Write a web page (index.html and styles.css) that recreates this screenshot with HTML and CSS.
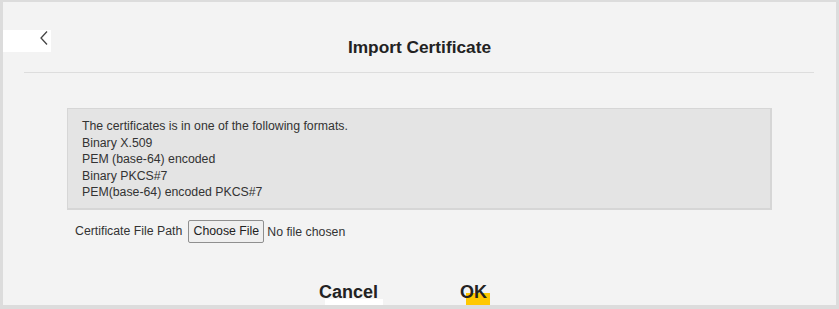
FILE: index.html
```html
<!DOCTYPE html>
<html lang="en">
<head>
    <meta charset="UTF-8">
    <title>Import Certificate</title>
    <link rel="stylesheet" href="styles.css">
</head>
<body>
    <div class="dialog">
        <!-- Заголовок -->
        <div class="header">
            <a class="back" href="#">
                <svg width="8" height="14" viewBox="0 0 8 14">
                    <polyline points="7,0.5 1,7 7,13.5" fill="none" stroke="#444" stroke-width="1.3"/>
                </svg>
            </a>
            <h1 class="title">Import Certificate</h1>
        </div>
        <div class="divider"></div>

        <!-- Форматы -->
        <div class="info">
            <p>The certificates is in one of the following formats.</p>
            <p>Binary X.509</p>
            <p>PEM (base-64) encoded</p>
            <p>Binary PKCS#7</p>
            <p>PEM(base-64) encoded PKCS#7</p>
        </div>

        <div class="file-row">
            <label for="cert-file">Certificate File Path</label>
            <input type="file" id="cert-file">
        </div>

        <!-- Кнопки -->
        <div class="footer">
            <button class="btn btn-cancel">Cancel</button>
            <button class="btn btn-ok">OK</button>
        </div>
    </div>
</body>
</html>
```

FILE: styles.css
```css
/* Общие стили */
body {
    margin: 0;
    padding: 0;
    font-family: "Liberation Sans", Arial, sans-serif;
    background-color: #dcdcdc;
}
.dialog {
    box-sizing: border-box;
    height: 309px;
    overflow: hidden;
    background-color: #f3f3f3;
    border-top: 2px solid #dcdcdc;
    border-left: 3px solid #dcdcdc;
    border-right: 3px solid #dcdcdc;
    border-bottom: 4px solid #dcdcdc;
}
.header {
    display: grid;
    grid-template-columns: 48px 1fr 48px;
    padding-top: 28px;
}
.back {
    display: flex;
    justify-content: flex-end;
    align-items: flex-start;
    height: 22px;
    padding: 1px 3px 0 0;
    box-sizing: border-box;
    background: #ffffff;
}
.title {
    margin: 7px 0 0;
    font-size: 17.3px;
    line-height: 20px;
    font-weight: bold;
    text-align: center;
    color: #222;
}
.divider {
    height: 1px;
    background: #dddddd;
    margin: 15px 22px 0 21px;
}
.info {
    width: 688px;
    margin: 35px 0 0 64px;
    padding: 9px 0 7px 14px;
    background: #e4e4e4;
    border: 1px solid #d6d6d6;
    border-right-width: 2px;
    border-bottom-width: 2px;
    font-size: 12.3px;
    color: #333;
}
.info p {
    margin: 0;
    line-height: 16.5px;
}
.file-row {
    display: flex;
    align-items: center;
    margin: 10px 0 0 72px;
    font-size: 12.3px;
    color: #333;
}
.file-row label {
    margin-right: 6px;
}
.file-row input {
    font-family: "Liberation Sans", Arial, sans-serif;
    font-size: 12.3px;
    color: #333;
}
.file-row input::file-selector-button {
    font-family: inherit;
    font-size: 12.3px;
    height: 23px;
    width: 76px;
    margin-right: 3px;
    padding: 0;
    background: #efefef;
    border: 1px solid #8f8f8f;
    border-radius: 2px;
    color: #222;
}
.footer {
    display: flex;
    gap: 82px;
    padding-left: 316px;
    margin-top: 39px;
}
.btn {
    position: relative;
    z-index: 0;
    padding: 0;
    border: none;
    background: none;
    font-family: "Liberation Sans", Arial, sans-serif;
    font-size: 18px;
    line-height: 20px;
    font-weight: bold;
    color: #222;
}
.btn::after {
    content: "";
    position: absolute;
    z-index: -1;
    left: 6px;
}
.btn-cancel::after {
    top: 17px;
    width: 58px;
    height: 10px;
    background: #ffffff;
}
.btn-ok::after {
    top: 11px;
    width: 24px;
    height: 16px;
    background: #ffc800;
}
```
